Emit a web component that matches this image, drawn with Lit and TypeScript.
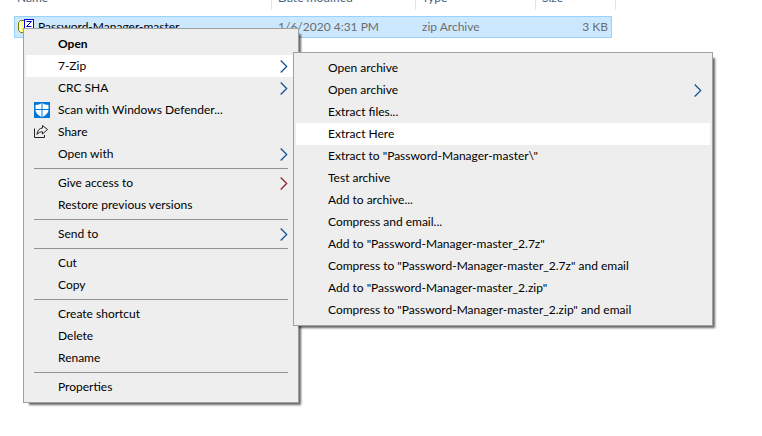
import { LitElement, html, css, svg, nothing } from "lit";
import { customElement, property } from "lit/decorators.js";

type Entry = {
  label: string;
  bold?: boolean;
  icon?: "defender" | "share";
  arrow?: boolean;
  alert?: boolean;
  active?: boolean;
};
type Group = Entry[];

const fileMenu: Group[] = [
  [
    { label: "Open", bold: true },
    { label: "7-Zip", arrow: true, active: true },
    { label: "CRC SHA", arrow: true },
    { label: "Scan with Windows Defender...", icon: "defender" },
    { label: "Share", icon: "share" },
    { label: "Open with", arrow: true },
  ],
  [{ label: "Give access to", arrow: true, alert: true }, { label: "Restore previous versions" }],
  [{ label: "Send to", arrow: true }],
  [{ label: "Cut" }, { label: "Copy" }],
  [{ label: "Create shortcut" }, { label: "Delete" }, { label: "Rename" }],
  [{ label: "Properties" }],
];

const zipMenu: Group[] = [
  [
    { label: "Open archive" },
    { label: "Open archive", arrow: true },
    { label: "Extract files..." },
    { label: "Extract Here", active: true },
    { label: 'Extract to "Password-Manager-master\\"' },
    { label: "Test archive" },
    { label: "Add to archive..." },
    { label: "Compress and email..." },
    { label: 'Add to "Password-Manager-master_2.7z"' },
    { label: 'Compress to "Password-Manager-master_2.7z" and email' },
    { label: 'Add to "Password-Manager-master_2.zip"' },
    { label: 'Compress to "Password-Manager-master_2.zip" and email' },
  ],
];

const icons = {
  defender: svg`<svg width="16" height="16" viewBox="0 0 16 16">
    <rect width="16" height="16" fill="#0078d7"/>
    <path d="M8 1C6.200 2.200 4 3 1.500 3v4.500C1.500 11 4.500 13.500 8 15c3.500-1.500 6.500-4 6.500-7.500V3C12 3 9.800 2.200 8 1z" fill="#fff"/>
    <path d="M8 1v14M1 7.500h14" stroke="#0078d7" fill="none"/>
  </svg>`,
  share: svg`<svg width="16" height="16" viewBox="0 0 16 16" fill="none" stroke="#222">
    <path d="M.5 4.500v9h10V11"/>
    <path d="M8.500 1.500L13.500 5.500l-5 4.500V7.800C6 7.800 4.300 8.600 3 10.500 3.300 6.500 5.300 4.200 8.500 4z"/>
  </svg>`,
};

@customElement("context-menu")
export class ContextMenu extends LitElement {
  @property({ attribute: false }) groups: Group[] = [];

  static styles = css`
    :host {
      display: block;
      box-sizing: border-box;
      padding: 4px 2px;
      border: 1px solid #a0a0a0;
      background: #eeeeee;
      box-shadow: 4px 4px 2px -2px rgba(0, 0, 0, 0.6);
    }
    .line {
      height: 0;
      margin: 3px 8px;
      border: 0;
      border-top: 1px solid #919191;
    }
    .item {
      display: flex;
      align-items: center;
      width: 100%;
      height: 22px;
      padding: 0 8px;
      border: 0;
      background: transparent;
      color: #000;
      font: inherit;
      text-align: left;
      white-space: nowrap;
    }
    .item.active {
      background: #fff;
    }
    .item.bold {
      font-weight: 700;
    }
    .icon {
      display: flex;
      flex: none;
      width: 24px;
    }
    .label {
      flex: 1;
    }
    .arrow {
      flex: none;
      color: #0a4f94;
    }
    .arrow.alert {
      color: #8c1d2c;
    }
  `;

  private item(e: Entry) {
    return html`<button class="item ${e.active ? "active" : ""} ${e.bold ? "bold" : ""}" role="menuitem">
      <span class="icon">${e.icon ? icons[e.icon] : nothing}</span>
      <span class="label">${e.label}</span>
      ${e.arrow
        ? html`<svg class="arrow ${e.alert ? "alert" : ""}" width="8" height="13" viewBox="0 0 8 13" fill="none" stroke="currentColor">
            <path d="M.7.500l6 6-6 6" stroke-width="1.200" />
          </svg>`
        : nothing}
    </button>`;
  }

  render() {
    return this.groups.map(
      (g, i) => html`${i ? html`<hr class="line" />` : nothing}
        <div class="group" role="group">${g.map((e) => this.item(e))}</div>`,
    );
  }
}

@customElement("app-root")
export class AppRoot extends LitElement {
  static styles = css`
    :host {
      display: block;
      position: relative;
      min-height: 100vh;
      overflow: hidden;
      background: #fff;
      font: 12px/16px Lato, "Open Sans", sans-serif;
    }
    .files {
      width: 602px;
      margin: -15px 0 0 14px;
      border-collapse: separate;
      border-spacing: 0;
      table-layout: fixed;
    }
    .name {
      width: 258px;
    }
    .date {
      width: 144px;
    }
    .type {
      width: 120px;
    }
    .rest {
      width: 4px;
    }
    th {
      box-sizing: border-box;
      height: 25px;
      padding: 5px 0 4px 6px;
      border-right: 1px solid #e5e5e5;
      color: #4c607a;
      font-weight: 400;
      text-align: left;
    }
    th:first-child {
      padding-left: 3px;
    }
    .gap td {
      height: 6px;
      padding: 0;
    }
    .file td {
      box-sizing: border-box;
      height: 22px;
      padding: 0 6px;
      border: solid #99d1ff;
      border-width: 1px 0;
      background: #cce8ff;
      color: #6d6d6d;
    }
    .file td:first-child {
      padding-left: 2px;
      border-left-width: 1px;
      color: #000;
    }
    .file td:last-child {
      padding-right: 3px;
      border-right-width: 1px;
      text-align: right;
    }
    .entry {
      display: flex;
      gap: 4px;
    }
    .main,
    .sub {
      position: absolute;
    }
    .main {
      left: 23px;
      top: 28px;
      width: 276px;
    }
    .sub {
      left: 293px;
      top: 52px;
      width: 420px;
    }
  `;

  render() {
    return html`
      <table class="files">
        <colgroup>
          <col class="name" />
          <col class="date" />
          <col class="type" />
          <col />
          <col class="rest" />
        </colgroup>
        <thead>
          <tr>
            <th>Name</th>
            <th>Date modified</th>
            <th>Type</th>
            <th colspan="2">Size</th>
          </tr>
        </thead>
        <tbody>
          <tr class="gap"><td colspan="5"></td></tr>
          <tr class="file">
            <td>
              <span class="entry">
                <svg width="17" height="16" viewBox="0 0 17 16">
                  <path d="M1.500 3.500l2-2h5v12h-5l-2-2z" fill="#ffff80" stroke="#7a7a00" />
                  <path d="M3.500 2.500v9" stroke="#ffffd8" />
                  <rect x="7.500" y=".5" width="9" height="9" fill="#fff" stroke="#0000ff" />
                  <path d="M9.500 2.500h5l-5 5h5" fill="none" stroke="#0000c0" />
                </svg>
                Password-Manager-master
              </span>
            </td>
            <td>1/6/2020 4:31 PM</td>
            <td>zip Archive</td>
            <td>3 KB</td>
          </tr>
        </tbody>
      </table>
      <context-menu class="main" role="menu" .groups=${fileMenu}></context-menu>
      <context-menu class="sub" role="menu" .groups=${zipMenu}></context-menu>
    `;
  }
}
